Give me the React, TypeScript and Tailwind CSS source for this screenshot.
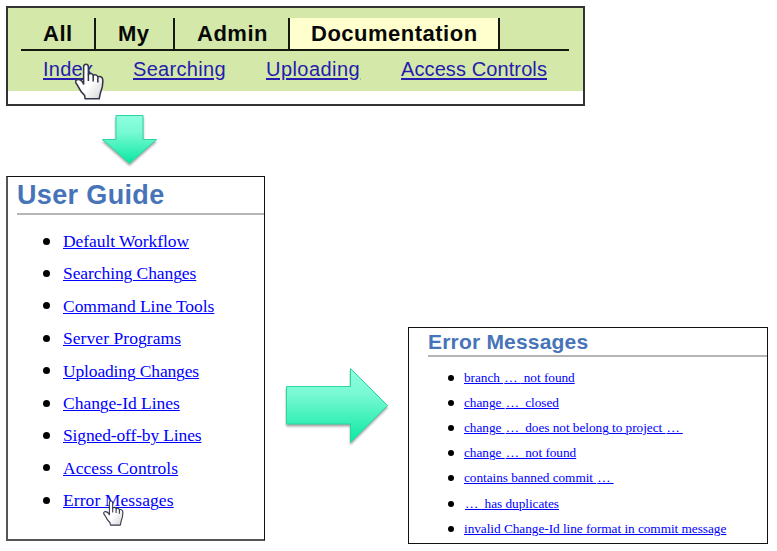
import React from "react";

const sans = "font-['Liberation_Sans',Arial,sans-serif]";
const serif = "font-['Liberation_Serif','Times_New_Roman',serif]";

const guideLinks = [
  { label: "Default Workflow", tracking: "tracking-[-0.06px]" },
  { label: "Searching Changes", tracking: "tracking-[-0.08px]" },
  { label: "Command Line Tools", tracking: "tracking-[-0.04px]" },
  { label: "Server Programs", tracking: "tracking-[0.06px]" },
  { label: "Uploading Changes", tracking: "tracking-[-0.15px]" },
  { label: "Change-Id Lines", tracking: "tracking-[-0.02px]" },
  { label: "Signed-off-by Lines", tracking: "tracking-[-0.14px]" },
  { label: "Access Controls", tracking: "tracking-[0.06px]" },
  { label: "Error Messages", tracking: "tracking-[0.09px]" },
];

const errorLinks = [
  "branch … not found",
  "change … closed",
  "change … does not belong to project …",
  "change … not found",
  "contains banned commit …",
  "… has duplicates",
  "invalid Change-Id line format in commit message",
];

function HandCursor({ className, id }: { className: string; id: string }) {
  return (
    <svg viewBox="0 0 28 36" className={className} aria-hidden="true">
      <defs>
        <linearGradient id={id} x1="0" y1="0" x2="1" y2="1">
          <stop offset="0.55" stopColor="#ffffff" />
          <stop offset="1" stopColor="#d2d2d2" />
        </linearGradient>
      </defs>
      <path
        d="M8.3 20.5V4C8.3 .4 12.9 .4 12.9 4V11.2C14.2 9.5 17.2 10 17.6 12.2C18.9 10.8 21.7 11.4 22.1 13.7C23.6 12.7 26.6 13.2 26.9 16.1C27.3 21.5 26.4 25 24.7 28.8L23.4 34.8H9.8L9.2 31.5C5.8 28.5 4.2 25.8 2.2 21.5C.2 19.2-.3 17.4 1.7 16.4C4.4 15.4 6.8 17.6 8.3 20.5Z"
        fill={"url(#" + id + ")"}
        stroke="#33364a"
        strokeWidth="1.5"
        strokeLinejoin="round"
      />
      <path d="M12.9 11V17.4M17.6 12.5V18M22.1 14V19" stroke="#33364a" strokeWidth="1.5" fill="none" />
    </svg>
  );
}

function Arrow({ className, viewBox, points, id }: { className: string; viewBox: string; points: string; id: string }) {
  return (
    <svg className={className} viewBox={viewBox} aria-hidden="true">
      <defs>
        <linearGradient id={id} x1="0" y1="0" x2="0" y2="1">
          <stop offset="0" stopColor="#8dffdf" />
          <stop offset="0.35" stopColor="#78f9d3" />
          <stop offset="1" stopColor="#09e8a1" />
        </linearGradient>
      </defs>
      <polygon points={points} fill={"url(#" + id + ")"} stroke="#2bd6a3" strokeWidth="1" />
    </svg>
  );
}

export default function App() {
  return (
    <main className="relative flex h-[551px] w-[777px] flex-col overflow-hidden bg-white">
      <section className={`relative ml-[6px] mt-[6px] h-[100px] w-[579px] shrink-0 border-2 border-[#333] ${sans}`}>
        <div className="h-[83px] bg-[#d4e9a9] pl-[13px] pt-[10px]">
          <nav className="flex h-[33px] w-[548px] border-b-2 border-[#15180f] text-[22px] font-bold leading-[32px] tracking-[0.5px] text-[#080808]">
            <span className="w-[75px] border-r-2 border-[#15180f] pl-[22px]">All</span>
            <span className="w-[79px] border-r-2 border-[#15180f] pl-[22px]">My</span>
            <span className="w-[115px] border-r-2 border-[#15180f] pl-[22px]">Admin</span>
            <span className="w-[210px] border-r-2 border-[#15180f] bg-[#ffffce] pl-[21px]">Documentation</span>
          </nav>
          <div className="flex h-[38px] pl-[22px] text-[20px] leading-[37px] tracking-[0.25px] text-[#241cae] underline decoration-[1.5px] underline-offset-[2px]">
            <a className="w-[90px]">Index</a>
            <a className="w-[133px] tracking-[0.32px]">Searching</a>
            <a className="w-[135px] tracking-[0.45px]">Uploading</a>
            <a className="tracking-[0.1px]">Access Controls</a>
          </div>
        </div>
        <HandCursor id="hand-index" className="absolute left-[67px] top-[55px] h-[37px] w-[29px]" />
      </section>

      <Arrow
        id="arrow-down"
        className="ml-[101px] mt-[9px] h-[50px] w-[56px] shrink-0 drop-shadow-[0_2px_1px_rgba(0,0,0,0.35)]"
        viewBox="0 0 56 50"
        points="15,.5 42,.5 42,24.5 55.5,24.5 28.5,48.5 1.5,24.5 15,24.5"
      />

      <div className="mt-[11px] flex">
        <section className="relative ml-[6px] h-[365px] w-[259px] border-[1.5px] border-b-2 border-l-2 border-[#111] border-b-[#555] border-l-[#555] pl-[9px]">
          <h1 className={`h-[38px] border-b-2 border-[#b5b5b5] text-[27px] font-bold leading-[37px] tracking-[0.35px] text-[#4774b9] ${sans}`}>User Guide</h1>
          <ul className={`pt-[10px] text-[17.5px] text-[#0000ff] ${serif}`}>
            {guideLinks.map(({ label, tracking }) => (
              <li key={label} className="flex h-[32.4px] items-center pl-[26px]">
                <span className="mr-[13px] size-[7px] rounded-full bg-black" />
                <a className={`underline decoration-1 underline-offset-1 ${tracking}`}>{label}</a>
              </li>
            ))}
          </ul>
          <HandCursor id="hand-errors" className="absolute left-[95px] top-[323px] h-[26px] w-[21px]" />
        </section>

        <Arrow
          id="arrow-right"
          className="ml-[20px] mt-[191px] h-[78px] w-[104px] shrink-0 drop-shadow-[0_2px_1px_rgba(0,0,0,0.35)]"
          viewBox="0 0 104 78"
          points="1.5,19.5 65.5,19.5 65.5,1.5 102.5,38.5 65.5,75.5 65.5,57 1.5,57"
        />

        <section className="ml-[19px] mt-[151px] h-[217px] w-[360px] border border-[#111] pl-[19px]">
          <h2 className={`h-[29px] border-b-2 border-[#b5b5b5] text-[21px] font-bold leading-[28px] tracking-[0.2px] text-[#4774b9] ${sans}`}>Error Messages</h2>
          <ul className={`pt-[8px] text-[13.3px] text-[#0000ff] ${serif}`}>
            {errorLinks.map((label) => (
              <li key={label} className="flex h-[25.2px] items-center whitespace-nowrap pl-[20px]">
                <span className="mr-[10px] size-[6px] rounded-full bg-black" />
                <a className="tracking-[-0.045px] underline decoration-1 underline-offset-1">
                  {label.split(/(…)/).map((part, i) =>
                    part === "…" ? <span key={i} className="pl-[1px] tracking-[3px]">…</span> : part
                  )}
                </a>
              </li>
            ))}
          </ul>
        </section>
      </div>
    </main>
  );
}
